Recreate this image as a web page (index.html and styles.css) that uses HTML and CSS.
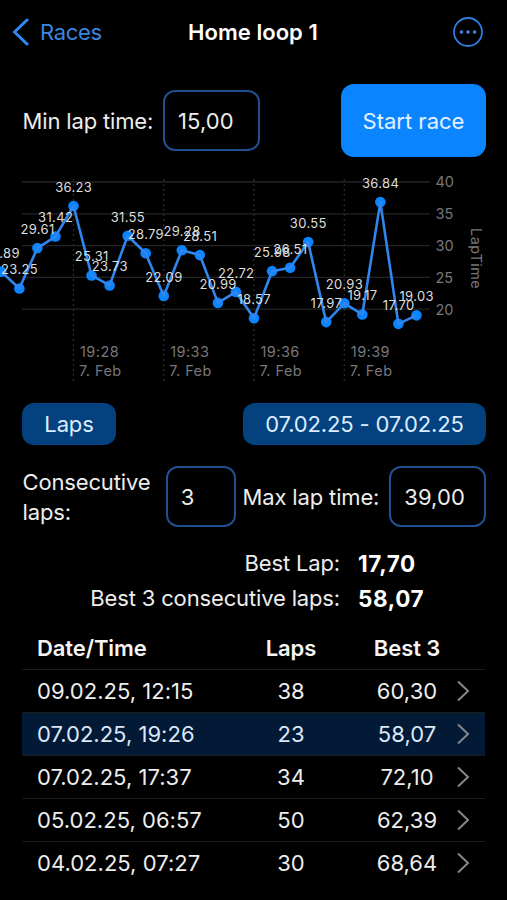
FILE: index.html
```
<!DOCTYPE html>
<html lang="en">
<head>
    <meta charset="UTF-8">
    <title>Home loop 1</title>
    <link rel="stylesheet" href="styles.css">
</head>
<body>
<div class="header">
    <a class="back">
        <svg width="17" height="28" viewBox="0 0 17 28"><path d="M15 2 L2.5 14 L15 26"/></svg>
        <span>Races</span>
    </a>
    <h1>Home loop 1</h1>
    <a class="more">
        <svg width="32" height="32" viewBox="0 0 32 32">
            <circle class="ring" cx="16" cy="16" r="14"/>
            <circle cx="9.4" cy="16" r="1.8"/>
            <circle cx="16" cy="16" r="1.8"/>
            <circle cx="22.6" cy="16" r="1.8"/>
        </svg>
    </a>
</div>
<div class="row start-row">
    <span class="label min-label">Min lap time:</span>
    <div class="field min-field">15,00</div>
    <div class="start">Start race</div>
</div>
<svg id="chart" class="chart" width="507" height="220" viewBox="0 170 507 220"></svg>
<div class="row filter-row">
    <div class="pill">Laps</div>
    <div class="pill date-pill">07.02.25 - 07.02.25</div>
</div>
<div class="row laps-row">
    <span class="label cons-label">Consecutive laps:</span>
    <div class="field cons-field">3</div>
    <span class="label max-label">Max lap time:</span>
    <div class="field max-field">39,00</div>
</div>
<div class="best">
    <span class="name">Best Lap:</span><b>17,70</b>
    <span class="name">Best 3 consecutive laps:</span><b>58,07</b>
</div>
<div class="table">
    <div class="tr th"><span>Date/Time</span><span>Laps</span><span>Best 3</span></div>
    <div class="tr"><span>09.02.25, 12:15</span><span>38</span><span>60,30</span><svg width="14" height="22" viewBox="0 0 14 22"><path d="M2 1.5 L12 11 L2 20.5"/></svg></div>
    <div class="tr selected"><span>07.02.25, 19:26</span><span>23</span><span>58,07</span><svg width="14" height="22" viewBox="0 0 14 22"><path d="M2 1.5 L12 11 L2 20.5"/></svg></div>
    <div class="tr"><span>07.02.25, 17:37</span><span>34</span><span>72,10</span><svg width="14" height="22" viewBox="0 0 14 22"><path d="M2 1.5 L12 11 L2 20.5"/></svg></div>
    <div class="tr"><span>05.02.25, 06:57</span><span>50</span><span>62,39</span><svg width="14" height="22" viewBox="0 0 14 22"><path d="M2 1.5 L12 11 L2 20.5"/></svg></div>
    <div class="tr"><span>04.02.25, 07:27</span><span>30</span><span>68,64</span><svg width="14" height="22" viewBox="0 0 14 22"><path d="M2 1.5 L12 11 L2 20.5"/></svg></div>
</div>
<script>
    var oChart=document.getElementById("chart");
    var laps=["25.89","23.25","29.61","31.42","36.23","25.31","23.73","31.55","28.79","22.09","29.28","28.51",
        "20.99","22.72","18.57","25.98","26.51","30.55","17.97","20.93","19.17","36.84","17.70","19.03"];
    var ticks=[[73.5,"19:28"],[163.7,"19:33"],[254,"19:36"],[344.3,"19:39"]];
    var html="";
    var line=[];
    var i,x,y;

    function getX(index){
        return 1.3+index*18.05;
    }
    function getY(value){
        return 182+(40-value)*6.36;
    }
    function text(cls,x,y,str){
        return '<text class="'+cls+'" x="'+x+'" y="'+y+'">'+str+'</text>';
    }

    // grid and axes
    for(i=40;i>=20;i-=5){
        y=getY(i);
        html+='<line class="grid" x1="22" x2="430" y1="'+y+'" y2="'+y+'"/>';
        html+=text("axis",435.5,y+5.3,i);
    }
    for(i=0;i<ticks.length;i++){
        x=ticks[i][0];
        html+='<line class="grid dash" x1="'+x+'" x2="'+x+'" y1="179" y2="381"/>';
        html+=text("axis time",x+6.5,357.3,ticks[i][1]);
        html+=text("axis time",x+5.5,376.3,"7. Feb");
    }
    html+='<text class="axis time" transform="translate(470.5 228) rotate(90)">LapTime</text>';

    // laps
    for(i=0;i<laps.length;i++){
        line.push(getX(i)+","+getY(laps[i]));
        html+='<circle class="dot" r="5.3" cx="'+getX(i)+'" cy="'+getY(laps[i])+'"/>';
    }
    html+='<polyline class="line" points="'+line.join(" ")+'"/>';
    for(i=0;i<laps.length;i++){
        html+=text("value",getX(i)+0.2,getY(laps[i])-14.2,laps[i]);
    }
    oChart.innerHTML=html;
</script>
</body>
</html>
```
FILE: styles.css
```
*{
    margin:0;
    padding:0;
    box-sizing:border-box;
}
body{
    width:507px;
    height:900px;
    overflow:hidden;
    background:#000;
    color:#ededed;
    font-family:Inter,"Liberation Sans",sans-serif;
    font-size:22px;
    letter-spacing:-0.15px;
    line-height:30px;
    white-space:nowrap;
}
.header{
    height:64px;
    padding:0 23px 0 12px;
    display:grid;
    grid-template-columns:176px 1fr 32px;
    align-items:center;
}
.header h1{
    font-size:22px;
    font-weight:600;
    letter-spacing:0.05px;
    color:#fff;
}
.back{
    display:flex;
    align-items:center;
    gap:11px;
    letter-spacing:-0.3px;
    color:#3b87df;
}
.back svg{
    fill:none;
    stroke:#2f8cf5;
    stroke-width:3;
    stroke-linecap:round;
    stroke-linejoin:round;
}
.more{
    height:32px;
}
.more svg{
    display:block;
    fill:#3d8ae5;
}
.more .ring{
    fill:none;
    stroke:#2f7ddb;
    stroke-width:1.8;
}
.row{
    display:flex;
    align-items:center;
    padding:0 21px 0 22px;
}
.field{
    height:61px;
    border:2px solid #224f8f;
    border-radius:12px;
    padding-left:13px;
    letter-spacing:0.1px;
    line-height:58px;
}
.start-row{
    height:106px;
    padding-top:7px;
}
.min-field{
    width:97px;
}
.min-label{
    width:141px;
    padding-left:0.5px;
}
.start{
    width:145px;
    height:73px;
    margin-left:auto;
    border-radius:13px;
    background:#0a84ff;
    color:#e4f1ff;
    letter-spacing:0;
    text-align:center;
    line-height:74px;
}
.chart{
    display:block;
}
.grid{
    stroke:#252527;
    stroke-width:1.3;
}
.dash{
    stroke:#2b2b2e;
    stroke-dasharray:2 3;
}
.axis{
    fill:#77777b;
    font-size:14.5px;
    letter-spacing:0;
}
.time{
    letter-spacing:0.45px;
}
.line{
    fill:none;
    stroke:#2f86ee;
    stroke-width:2.6;
    stroke-linejoin:round;
}
.dot{
    fill:#0a84ff;
}
.value{
    fill:#dedede;
    font-size:13px;
    letter-spacing:0.35px;
    text-anchor:middle;
}
.filter-row{
    height:68px;
    justify-content:space-between;
}
.pill{
    height:42px;
    width:94px;
    border-radius:12px;
    background:#04417f;
    color:#dcecff;
    text-align:center;
    line-height:42px;
}
.date-pill{
    width:243px;
}
.laps-row{
    height:77px;
}
.cons-label{
    width:144px;
    padding-left:0.5px;
    white-space:normal;
}
.cons-field{
    width:70px;
}
.max-label{
    width:154px;
    padding-left:7px;
}
.max-field{
    width:97px;
}
.best{
    display:grid;
    grid-template-columns:340px auto;
    column-gap:18px;
    grid-auto-rows:35px;
    line-height:35px;
    padding-top:10.5px;
}
.best .name{
    text-align:right;
}
.best b{
    font-size:22.5px;
    font-weight:700;
    letter-spacing:0.6px;
    color:#fff;
}
.table{
    margin:12px 22px 0 22px;
}
.tr{
    display:grid;
    grid-template-columns:186px 136px 96px 1fr;
    align-items:center;
    height:43.2px;
    padding-left:15px;
    letter-spacing:0.02px;
    border-top:1px solid #1d1d1f;
}
.tr span:nth-child(2),
.tr span:nth-child(3){
    text-align:center;
}
.tr svg{
    margin-left:1px;
    fill:none;
    stroke:#87878b;
    stroke-width:2;
}
.th{
    height:41px;
    border-top:0;
    font-weight:600;
    letter-spacing:-0.1px;
    color:#f5f5f5;
}
.selected{
    background:#031a36;
    color:#dce8f8;
}
```
